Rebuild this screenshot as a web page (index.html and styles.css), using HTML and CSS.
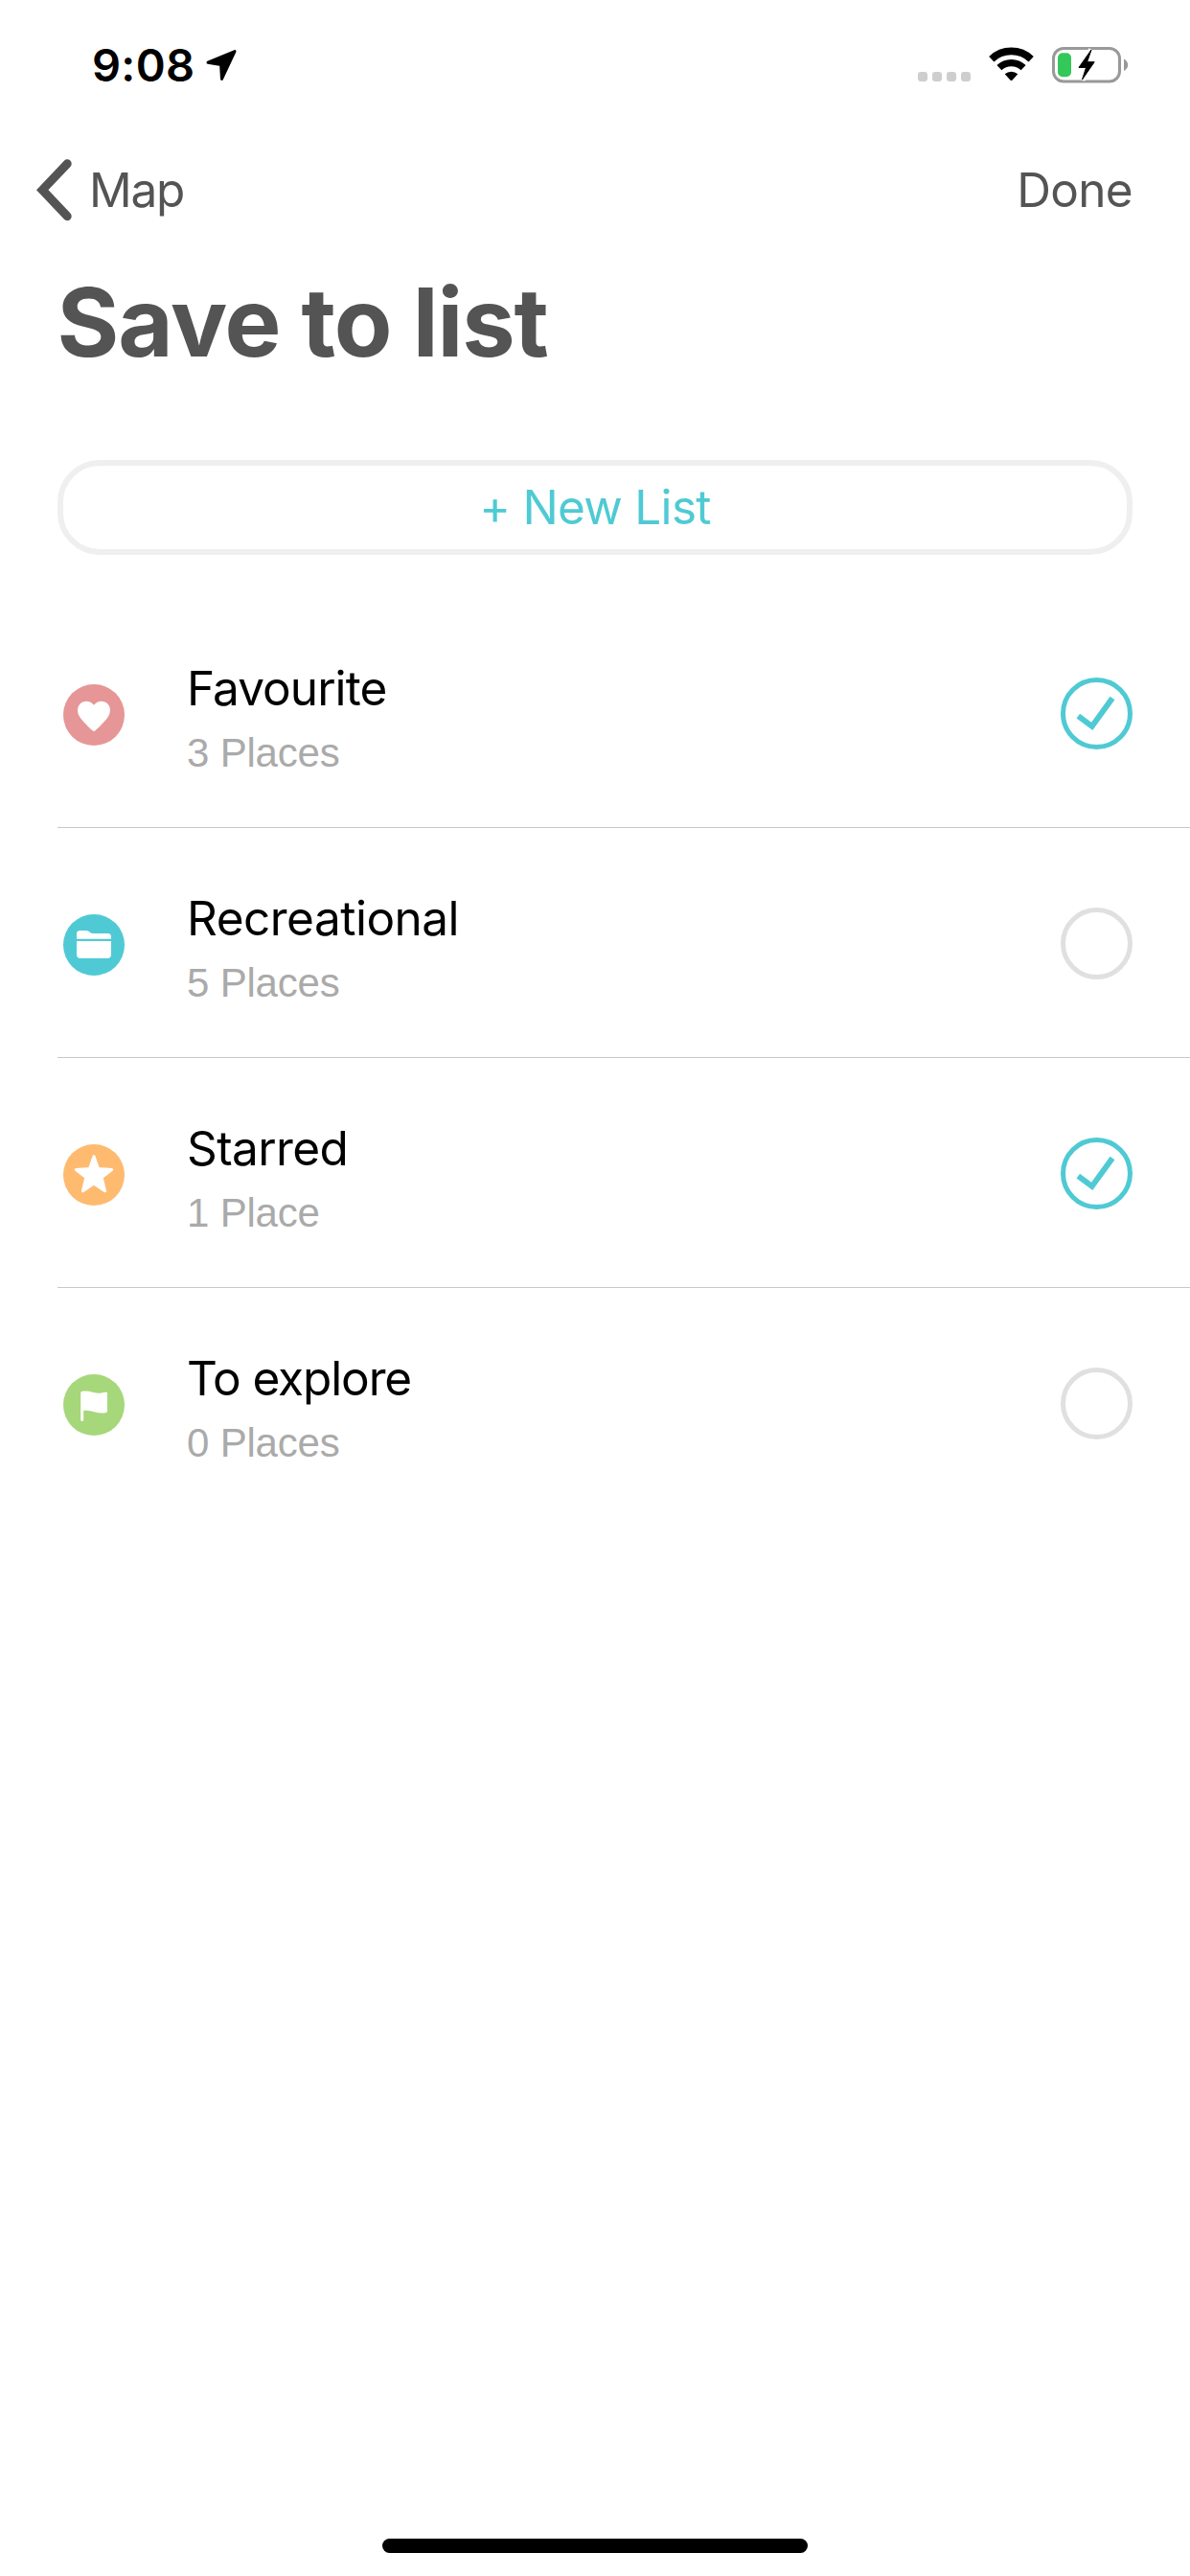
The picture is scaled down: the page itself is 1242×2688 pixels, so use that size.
FILE: index.html
```html
<!DOCTYPE html>
<html lang="en">
<head>
<meta charset="utf-8">
<title>Save to list</title>
<link rel="stylesheet" href="styles.css">
</head>
<body>
<div class="status">
  <span class="time">9:08</span>
  <svg class="location" width="34" height="34" viewBox="0 0 34 34"><path d="M3 14.2 31 2.6 17.5 31.4 16.6 16.4Z" stroke="#000" stroke-width="3" stroke-linejoin="round"/></svg>
  <svg class="dots" width="56" height="10" viewBox="0 0 56 10" fill="#cecece"><rect width="10" height="10" rx="3"/><rect x="15" width="10" height="10" rx="3"/><rect x="30" width="10" height="10" rx="3"/><rect x="45" width="10" height="10" rx="3"/></svg>
  <svg class="wifi" width="48" height="36" viewBox="0 0 48 36">
    <path d="M2.8 13.1a30 30 0 0 1 41.4 0" fill="none" stroke="#000" stroke-width="7.6" transform="translate(0 -.4)"/>
    <path d="M10.9 21.6a18.2 18.2 0 0 1 25.2 0" fill="none" stroke="#000" stroke-width="7.2"/>
    <path d="M16.7 28.3a10.5 10.5 0 0 1 13.6 0l-5.7 6.2q-1.1 1.1-2.2 0Z"/>
  </svg>
  <svg class="battery" width="80" height="38" viewBox="0 0 80 38">
    <rect x="1.5" y="1.5" width="69" height="34.5" rx="10.5" fill="none" stroke="#999" stroke-width="3"/>
    <path d="M75 12.5q4.2 2.3 4.2 6.3t-4.2 6.3Z" fill="#999"/>
    <rect x="6" y="6.3" width="14" height="25" rx="5" fill="#34c759"/>
    <path d="M41 3 28 21.4h7.6L31.5 34 44.200 15.700h-7.600Z" stroke="#fff" stroke-width="6"/>
    <path d="M41 3 28 21.4h7.6L31.5 34 44.200 15.700h-7.600Z" stroke="#000" stroke-width="1" stroke-linejoin="round"/>
  </svg>
</div>
<nav class="nav">
  <span class="back"><svg width="38" height="66" viewBox="0 0 38 66"><path d="M33.2 5.8 7.2 33.2 33.2 60.7" fill="none" stroke="#545454" stroke-width="9" stroke-linecap="round"/></svg><span class="map">Map</span></span>
  <span class="done">Done</span>
</nav>
<h1 class="title">Save to list</h1>
<div class="new-list">+ New List</div>
<ul class="lists">
  <li class="row">
    <svg class="icon" viewBox="0 0 64 64"><circle cx="32" cy="32" r="32" fill="#e69696"/><path fill="#fff" d="M32 21.7C35 17.8 39.5 17 43.500 18.500 49 20.500 50.800 28 46.800 34 43.500 39 37.500 44.600 33.600 48.200Q32 49.600 30.400 48.200C26.500 44.600 20.500 39 17.200 34 13.200 28 15 20.500 20.500 18.500 24.500 17 29 17.800 32 21.700Z"/></svg>
    <div class="text"><span class="name favourite">Favourite</span><span class="count">3 Places</span></div>
    <svg class="check" viewBox="0 0 75 75" fill="none" stroke="#4fcad4"><circle cx="37.500" cy="37.500" r="35" stroke-width="5"/><path d="M18.300 40.200 32.700 50.900 54 21.500" stroke-width="6"/></svg>
  </li>
  <li class="row">
    <svg class="icon" viewBox="0 0 64 64"><circle cx="32" cy="32" r="32" fill="#4fcad4"/><path fill="#fff" d="M14 25.700V20.500Q14 17 17.500 17H24Q26 17 27.500 18.500 29 20 31 20H46.500Q50 20 50 23.500V25.700ZM14 28H50V42Q50 46 46 46H18Q14 46 14 42Z"/></svg>
    <div class="text"><span class="name recreational">Recreational</span><span class="count">5 Places</span></div>
    <svg class="check" viewBox="0 0 75 75" fill="none" stroke="#e0e0e0"><circle cx="37.500" cy="37.500" r="35" stroke-width="5"/></svg>
  </li>
  <li class="row">
    <svg class="icon" viewBox="0 0 64 64"><circle cx="32" cy="32" r="32" fill="#febb6f"/><path fill="#fff" stroke="#fff" stroke-width="3" stroke-linejoin="round" d="M32 12.700 36.500 25.500 50.700 26.500 40.200 34.500 43.500 48.800 32 41 20.500 48.800 23.800 34.500 13.300 26.500 27.500 25.500Z"/></svg>
    <div class="text"><span class="name starred">Starred</span><span class="count">1 Place</span></div>
    <svg class="check" viewBox="0 0 75 75" fill="none" stroke="#4fcad4"><circle cx="37.500" cy="37.500" r="35" stroke-width="5"/><path d="M18.300 40.200 32.700 50.900 54 21.500" stroke-width="6"/></svg>
  </li>
  <li class="row">
    <svg class="icon" viewBox="0 0 64 64"><circle cx="32" cy="32" r="32" fill="#a6d77a"/><path fill="#fff" d="M18.200 19.500Q18.200 17.800 20 17.700C27 16.500 34 20.500 39 19.700 42 19.400 43.500 18.500 46 19V38.500Q46 39.500 45 40C37 42.500 29 36.500 21.200 38V47.500Q21.200 49 19.700 49T18.200 47.500Z"/></svg>
    <div class="text"><span class="name explore">To explore</span><span class="count">0 Places</span></div>
    <svg class="check" viewBox="0 0 75 75" fill="none" stroke="#e0e0e0"><circle cx="37.500" cy="37.500" r="35" stroke-width="5"/></svg>
  </li>
</ul>
<div class="home"></div>
</body>
</html>
```
FILE: styles.css
```css
* { box-sizing: border-box; }
body {
  margin: 0;
  height: 2688px;
  display: flex;
  flex-direction: column;
  background: #fff;
  font-family: Inter, "Liberation Sans", sans-serif;
  overflow: hidden;
}
.status {
  height: 132px;
  padding: 0 64px 0 96px;
  display: flex;
  align-items: flex-start;
}
.status svg { flex: none; }
.time { font-size: 47px; font-weight: 600; line-height: 57px; letter-spacing: .3px; margin-top: 39px; width: 118px; white-space: nowrap; }
.location { margin-top: 51px; }
.dots { margin: 75px 0 0 auto; }
.wifi { margin: 49px 0 0 18px; }
.battery { margin: 49px 0 0 18px; }
.nav {
  height: 132px;
  padding: 0 60px 0 37px;
  display: flex;
  justify-content: space-between;
  align-items: center;
  font-size: 49.5px;
  line-height: 60px;
  color: #545454;
}
.back { display: flex; align-items: center; gap: 18px; }
.map { letter-spacing: -1.2px; }
.done { letter-spacing: -.7px; }
.title {
  margin: 12px 0 0 59.5px;
  font-size: 99px;
  line-height: 120px;
  font-weight: 700;
  letter-spacing: -1.1px;
  color: #545454;
}
.new-list {
  margin: 84px 60px 0;
  height: 99px;
  border: 6px solid #efefef;
  border-radius: 44px;
  font-size: 49.5px;
  line-height: 87px;
  letter-spacing: -.7px;
  text-align: center;
  color: #4fcad4;
}
.lists { list-style: none; margin: 45px 0 0 60px; padding: 0; }
.row {
  height: 240px;
  padding: 64px 60px 0 6px;
  display: flex;
  align-items: flex-start;
  border-bottom: 1px solid #c8c7cc;
}
.row:last-child { border-bottom: 0; }
.icon { width: 64px; height: 64px; margin-top: 26px; flex: none; }
.text { display: flex; flex-direction: column; gap: 14px; margin-left: 65px; flex: 1; }
.name { font-size: 49.5px; line-height: 60px; color: #000; }
.favourite { letter-spacing: -.95px; }
.recreational { letter-spacing: -.5px; }
.starred { letter-spacing: -.6px; }
.explore { letter-spacing: -1.1px; }
.count { font-family: "Liberation Sans", Arial, sans-serif; font-size: 42px; line-height: 47px; letter-spacing: -.2px; color: #aaa; }
.check { width: 75px; height: 75px; margin-top: 19px; flex: none; }
.home { width: 444px; height: 15px; border-radius: 8px; background: #000; margin: auto auto 24px; }
```
